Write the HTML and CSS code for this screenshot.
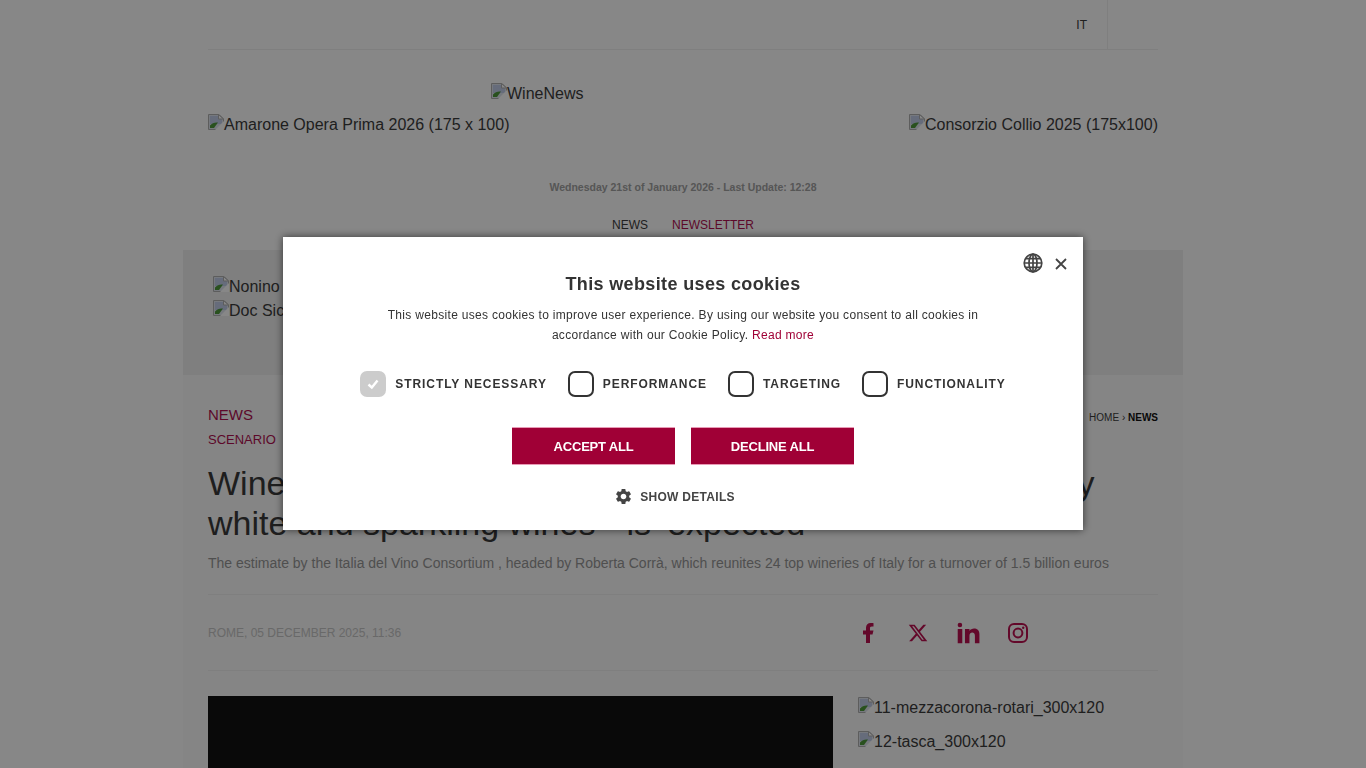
FILE: index.html
```html
<!DOCTYPE html>
<html lang="en">

<head>
    <meta charset="UTF-8">
    <meta name="viewport" content="width=device-width, initial-scale=1.0">
    <title>WineNews</title>
    <link rel="stylesheet" href="styles.css">
</head>

<body>

    <svg class="defs" width="0" height="0">
        <symbol id="broken" viewBox="0 0 16 16">
            <path d="M0.5 0.5H11L15.5 5V15.5H0.5Z" fill="#dfe4ee" stroke="#b0b0b0" />
            <path d="M2 2H10.5L14 5.5V10H2Z" fill="#c0cde8" />
            <path d="M2 14V11.5C4 9 7 8 10 8.5L6 14Z" fill="#4f9a3c" />
            <path d="M10.5 0.5V5H15.5Z" fill="#fff" stroke="#b0b0b0" />
            <path d="M7 16L16 7V16Z" fill="#fff" />
        </symbol>
    </svg>

    <div class="page">
        <div class="topbar">
            <span class="lang">IT</span>
            <span class="topbar-cell"></span>
        </div>

        <div class="logo-row">
            <span class="broken"><svg class="broken-icon"><use href="#broken" /></svg>WineNews</span>
        </div>
        <div class="sponsor-row">
            <span class="broken"><svg class="broken-icon"><use href="#broken" /></svg>Amarone Opera Prima 2026 (175 x 100)</span>
            <span class="broken"><svg class="broken-icon"><use href="#broken" /></svg>Consorzio Collio 2025 (175x100)</span>
        </div>

        <div class="date-line">Wednesday 21st of January 2026 - Last Update: 12:28</div>

        <div class="nav">
            <a class="nav-link">NEWS</a>
            <a class="nav-link nav-wine">NEWSLETTER</a>
        </div>

        <div class="main">
            <div class="band">
                <div class="broken"><svg class="broken-icon"><use href="#broken" /></svg>Nonino</div>
                <div class="broken"><svg class="broken-icon"><use href="#broken" /></svg>Doc Sicilia</div>
            </div>

            <div class="article">
                <div class="crumb-row">
                    <div>
                        <div class="section">NEWS</div>
                        <div class="subsection">SCENARIO</div>
                    </div>
                    <div class="breadcrumb">HOME › <b>NEWS</b></div>
                </div>

                <h1>Wine exports, in 2025 a decline of 3.75% in value with only<br>white and sparkling wines&nbsp;" is &#8201;expected</h1>
                <p class="lead">The estimate by the Italia del Vino Consortium , headed by Roberta Corrà, which reunites 24 top wineries of Italy for a turnover of 1.5 billion euros</p>

                <div class="meta-row">
                    <div class="meta-date">ROME, 05 DECEMBER 2025, 11:36</div>
                    <div class="social">
                        <svg class="social-icon" viewBox="0 0 24 24"><path d="M14 13.5h2.5l1-4H14v-2c0-1.03 0-2 2-2h1.5V2.14c-.326-.043-1.557-.14-2.857-.14C11.928 2 10 3.657 10 6.7v2.8H7v4h3V22h4v-8.5z" /></svg>
                        <svg class="social-icon" viewBox="-2 -2 28 28"><path d="M18.244 2.25h3.308l-7.227 8.26 8.502 11.24H16.17l-5.214-6.817L4.99 21.75H1.68l7.73-8.835L1.254 2.25H8.08l4.713 6.231zm-1.161 17.52h1.833L7.084 4.126H5.117z" /></svg>
                        <svg class="social-icon" viewBox="1.5 1.5 21 21"><path d="M6.94 5a2 2 0 1 1-4-.002 2 2 0 0 1 4 .002zM7 8.48H3V21h4V8.48zm6.32 0H9.34V21h3.94v-6.57c0-3.66 4.77-4 4.77 0V21H22v-7.93c0-6.17-7.06-5.94-8.72-2.91l.04-1.68z" /></svg>
                        <svg class="social-icon social-line" viewBox="0 0 24 24"><rect x="3" y="3" width="18" height="18" rx="5" /><circle cx="12" cy="12" r="4.4" /><circle class="social-dot" cx="17.2" cy="6.8" r="1.2" /></svg>
                    </div>
                </div>

                <div class="content-row">
                    <div class="video"></div>
                    <div class="side">
                        <div class="broken"><svg class="broken-icon"><use href="#broken" /></svg>11-mezzacorona-rotari_300x120</div>
                        <div class="broken"><svg class="broken-icon"><use href="#broken" /></svg>12-tasca_300x120</div>
                    </div>
                </div>
            </div>
        </div>
    </div>

    <!-- Cookie dialog -->
    <div class="overlay">
        <div class="cookie-box">
            <div class="cookie-tools">
                <svg class="globe" viewBox="0 0 20 20">
                    <circle cx="10" cy="10" r="8.8" />
                    <ellipse cx="10" cy="10" rx="4" ry="8.8" />
                    <path d="M10 1.2V18.8M1.2 10H18.8M2.4 5.6H17.6M2.4 14.4H17.6" />
                </svg>
                <svg class="close" viewBox="0 0 12 12"><path d="M1 1L11 11M11 1L1 11" /></svg>
            </div>

            <div class="cookie-title">This website uses cookies</div>
            <div class="cookie-text">
                This website uses cookies to improve user experience. By using our website you consent to all cookies in<br>
                accordance with our Cookie Policy. <a class="read-more">Read more</a>
            </div>

            <div class="cookie-options">
                <label class="option">
                    <span class="check check-on">
                        <svg viewBox="0 0 14 14"><path d="M2.5 7.5L5.8 10.5L11.5 3.5" /></svg>
                    </span>
                    STRICTLY NECESSARY
                </label>
                <label class="option"><span class="check"></span>PERFORMANCE</label>
                <label class="option"><span class="check"></span>TARGETING</label>
                <label class="option"><span class="check"></span>FUNCTIONALITY</label>
            </div>

            <div class="cookie-buttons">
                <button class="cookie-btn">ACCEPT ALL</button>
                <button class="cookie-btn">DECLINE ALL</button>
            </div>

            <div class="show-details">
                <svg class="gear" viewBox="0 0 24 24"><path d="M19.14 12.94c.04-.3.06-.61.06-.94 0-.32-.02-.64-.07-.94l2.03-1.58a.49.49 0 0 0 .12-.61l-1.92-3.32a.488.488 0 0 0-.59-.22l-2.39.96c-.5-.38-1.03-.7-1.62-.94l-.36-2.54a.484.484 0 0 0-.48-.41h-3.84c-.24 0-.43.17-.47.41l-.36 2.54c-.59.24-1.13.57-1.62.94l-2.39-.96c-.22-.08-.47 0-.59.22L2.74 8.87c-.12.21-.08.47.12.61l2.03 1.58c-.05.3-.09.63-.09.94s.02.64.07.94l-2.03 1.58a.49.49 0 0 0-.12.61l1.92 3.32c.12.22.37.29.59.22l2.39-.96c.5.38 1.03.7 1.62.94l.36 2.54c.05.24.24.41.48.41h3.84c.24 0 .44-.17.47-.41l.36-2.54c.59-.24 1.13-.56 1.62-.94l2.39.96c.22.08.47 0 .59-.22l1.92-3.32c.12-.22.07-.47-.12-.61l-2.01-1.58zM12 15.6c-1.98 0-3.6-1.62-3.6-3.6s1.62-3.6 3.6-3.6 3.6 1.62 3.6 3.6-1.62 3.6-3.6 3.6z" /></svg>
                SHOW DETAILS
            </div>
        </div>
    </div>

</body>

</html>
```

FILE: styles.css
```css
html, body {
    height: 100%;
    overflow: hidden;
}

body {
    background-color: #fff;
    color: #3c3c3c;
    font-family: "Liberation Sans", Arial, sans-serif;
    font-size: 16px;
    margin: 0;
}

.defs {
    display: block;
    height: 0;
}

.page {
    width: 1000px;
    margin: 0 auto;
}

.topbar {
    display: flex;
    justify-content: flex-end;
    height: 49px;
    margin: 0 25px;
    border-bottom: 1px solid #f0f0f0;
}

.lang {
    font-size: 12px;
    line-height: 51px;
    margin-right: 20px;
}

.topbar-cell {
    width: 50px;
    border-left: 1px solid #f0f0f0;
}

.broken {
    line-height: 18px;
    white-space: nowrap;
}

.broken-icon {
    width: 16px;
    height: 16px;
    vertical-align: 0;
}

.logo-row {
    padding: 33px 0 0 308px;
    height: 31px;
}

.sponsor-row {
    display: flex;
    justify-content: space-between;
    margin: 0 25px;
    height: 65px;
}

.date-line {
    color: #a2a2a2;
    font-size: 10.5px;
    font-weight: bold;
    line-height: 16px;
    text-align: center;
}

.nav {
    display: flex;
    justify-content: center;
    gap: 24px;
    font-size: 12px;
    line-height: 14px;
    padding-top: 23px;
    height: 33px;
}

.nav-wine {
    color: #b01050;
}

.main {
    background-color: #fbfbfb;
    height: 600px;
    margin-top: -1px;
    position: relative;
}

.band {
    background-color: #f0f0f0;
    height: 125px;
    padding: 25px 30px 0;
    box-sizing: border-box;
}

.band .broken {
    line-height: 24px;
}

.article {
    padding: 0 25px;
}

.crumb-row {
    display: flex;
    justify-content: space-between;
    align-items: flex-start;
    padding-top: 31px;
}

.section {
    color: #b01050;
    font-size: 15px;
    line-height: 18px;
}

.subsection {
    color: #b01050;
    font-size: 13px;
    line-height: 16px;
    margin-top: 8px;
}

.breadcrumb {
    font-size: 10px;
    line-height: 12px;
    margin-top: 6px;
}

.breadcrumb b {
    color: #111;
}

h1 {
    color: #3a3a3a;
    font-size: 34px;
    font-weight: normal;
    line-height: 40px;
    margin: 15px 0 0;
    white-space: nowrap;
}

.lead {
    color: #969696;
    font-size: 14px;
    line-height: 18px;
    margin: 11px 0 0;
    padding-bottom: 22px;
    border-bottom: 1px solid #f0f0f0;
}

.meta-row {
    display: flex;
    align-items: center;
    height: 75px;
    border-bottom: 1px solid #f0f0f0;
}

.meta-date {
    color: #c6c6c6;
    font-size: 12px;
    width: 648px;
}

.social {
    display: flex;
    gap: 26px;
}

.social-icon {
    width: 24px;
    height: 24px;
    fill: #bc1050;
}

.social-line {
    fill: none;
    stroke: #bc1050;
    stroke-width: 2;
}

.social-dot {
    fill: #bc1050;
    stroke: none;
}

.content-row {
    display: flex;
    gap: 25px;
    padding-top: 25px;
}

.video {
    background-color: #111;
    width: 625px;
    height: 352px;
}

.side {
    margin-top: 1px;
}

.side .broken {
    line-height: 22px;
    margin-bottom: 12px;
}

/* Cookie dialog */
.overlay {
    position: fixed;
    top: 0;
    left: 0;
    right: 0;
    bottom: 0;
    background-color: rgba(0, 0, 0, 0.47);
}

.cookie-box {
    position: absolute;
    top: 237px;
    left: 283px;
    width: 800px;
    height: 293px;
    box-sizing: border-box;
    padding-top: 36px;
    background-color: #fff;
    box-shadow: 0 0 8px rgba(0, 0, 0, 0.6);
    color: #333;
    text-align: center;
}

.cookie-tools {
    position: absolute;
    top: 16px;
    right: 16px;
    display: flex;
    align-items: center;
    gap: 12px;
}

.globe {
    width: 20px;
    height: 20px;
    fill: none;
    stroke: #444;
    stroke-width: 1.7;
}

.close {
    width: 12px;
    height: 12px;
    margin-top: 1px;
    fill: none;
    stroke: #444;
    stroke-width: 1.8;
}

.cookie-title {
    font-size: 18px;
    font-weight: bold;
    letter-spacing: 0.36px;
    line-height: 22px;
}

.cookie-text {
    font-size: 12px;
    letter-spacing: 0.31px;
    line-height: 20px;
    margin-top: 10px;
}

.read-more {
    color: #a00036;
}

.cookie-options {
    display: flex;
    justify-content: center;
    align-items: center;
    gap: 21px;
    margin-top: 26px;
}

.option {
    display: flex;
    align-items: center;
    gap: 9px;
    font-size: 12px;
    font-weight: bold;
    letter-spacing: 0.92px;
}

.check {
    display: flex;
    align-items: center;
    justify-content: center;
    width: 26px;
    height: 26px;
    box-sizing: border-box;
    border: 2px solid #333;
    border-radius: 7px;
}

.check-on {
    background-color: #ccc;
    border-color: #ccc;
}

.check-on svg {
    width: 14px;
    height: 14px;
    fill: none;
    stroke: #fff;
    stroke-width: 2.4;
}

.cookie-buttons {
    display: flex;
    justify-content: center;
    gap: 16px;
    margin-top: 30px;
}

.cookie-btn {
    width: 163px;
    height: 38px;
    background-color: #a00036;
    border: none;
    border-top: 1px solid #e89ab5;
    border-bottom: 1px solid #e89ab5;
    color: #fff;
    font-family: inherit;
    font-size: 13px;
    font-weight: bold;
    letter-spacing: -0.2px;
    cursor: pointer;
}

.show-details {
    display: flex;
    justify-content: center;
    align-items: center;
    gap: 7px;
    margin-top: 22px;
    padding-right: 17px;
    font-size: 12px;
    font-weight: bold;
    letter-spacing: 0.3px;
    color: #444;
}

.gear {
    width: 19px;
    height: 19px;
    fill: #444;
}
```
